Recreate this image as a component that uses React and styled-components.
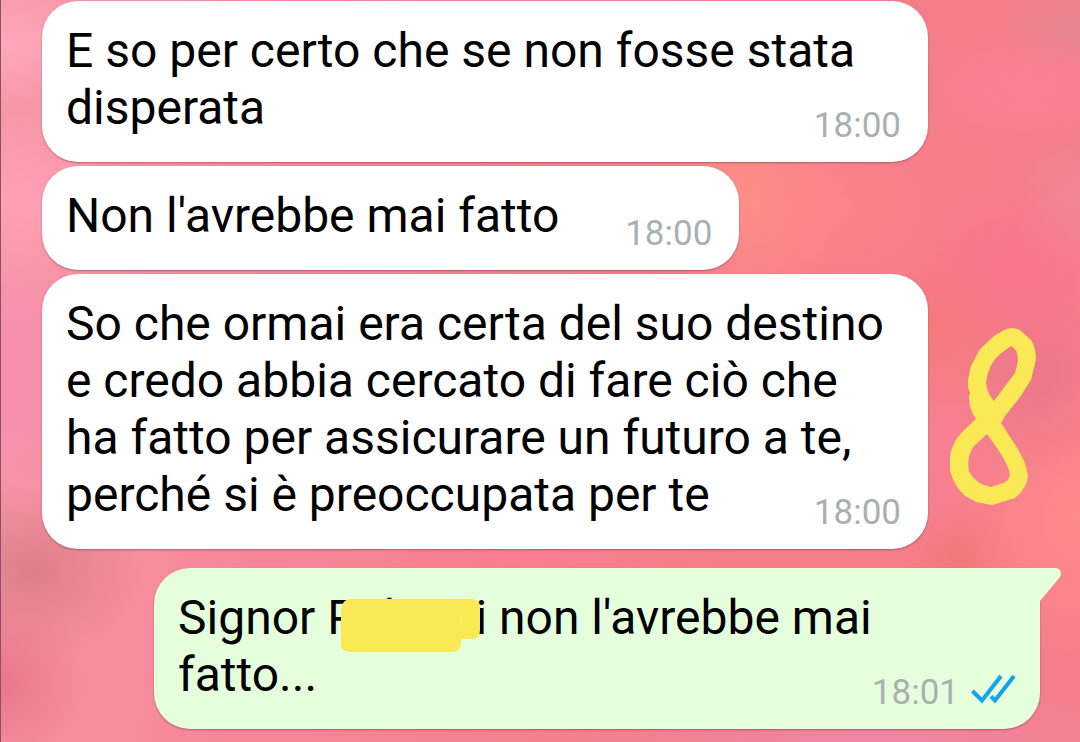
import { Fragment } from "react";
import styled, { createGlobalStyle } from "styled-components";

const GlobalStyle = createGlobalStyle`
  * {
    box-sizing: border-box;
  }

  body {
    margin: 0;
    font-family: Roboto, "Liberation Sans", sans-serif;
  }
`;

const Chat = styled.main`
  position: relative;
  display: flex;
  flex-direction: column;
  align-items: flex-start;
  gap: 4px;
  min-height: 100vh;
  padding: 1px 40px 13px 41px;
  overflow: hidden;
  border-left: 1px solid #8f4f62;
  background:
    radial-gradient(ellipse 130px 60px at 0% 6%, #ffa8bb, transparent),
    radial-gradient(ellipse 120px 90px at 1% 27%, #ffa0b5, transparent),
    radial-gradient(ellipse 110px 150px at 0% 50%, #f78fb0, transparent),
    radial-gradient(ellipse 110px 90px at 3% 77%, #de7d8a, transparent),
    radial-gradient(ellipse 90px 90px at 0% 92%, #ea758b, transparent),
    radial-gradient(ellipse 110px 120px at 69% 27%, #fe8e87, transparent),
    radial-gradient(ellipse 120px 90px at 78% 28%, #fb828a, transparent),
    radial-gradient(ellipse 80px 40px at 100% 4%, #e58790, transparent),
    radial-gradient(ellipse 120px 60px at 95% 12%, #fc8094, transparent),
    radial-gradient(ellipse 70px 70px at 100% 27%, #f38594, transparent),
    radial-gradient(ellipse 110px 90px at 94% 36%, #f9748b, transparent),
    radial-gradient(ellipse 70px 90px at 87% 44%, #f57a7c, transparent),
    radial-gradient(ellipse 60px 90px at 87% 61%, #f98094, transparent),
    radial-gradient(ellipse 80px 110px at 96% 50%, #ec7789, transparent),
    radial-gradient(ellipse 120px 140px at 100% 70%, #fe8b8b, transparent),
    radial-gradient(ellipse 60px 50px at 89% 75%, #ee7a7a, transparent),
    radial-gradient(ellipse 150px 60px at 48% 75%, #fb7d92, transparent),
    radial-gradient(ellipse 300px 60px at 80% 100%, #ee86a4, transparent),
    linear-gradient(100deg, #f59aa8 0%, #f68698 30%, #f37e89 65%, #f57f8c 100%);
`;

const Bubble = styled.article`
  position: relative;
  display: grid;
  align-items: end;
  width: ${({ $wide }) => ($wide ? "calc(100% - 112px)" : "auto")};
  padding: 21px 27px 26px 24px;
  border-radius: 36px;
  background: ${({ $sent }) => ($sent ? "#e5ffdc" : "#ffffff")};
  box-shadow: 0 1px 2px rgba(90, 30, 40, 0.4);
  ${({ $sent }) =>
    $sent &&
    `
    align-self: flex-end;
    margin-top: 15px;
    border-top-right-radius: 0;
  `}
`;

const Message = styled.p`
  grid-area: 1 / 1;
  margin: 0;
  font-size: 48px;
  line-height: 57px;
  color: #000000;
`;

/* keeps the last line clear of the time */
const TimeSpace = styled.span`
  display: inline-block;
  width: 153px;
`;

const Meta = styled.footer`
  grid-area: 1 / 1;
  justify-self: end;
  display: flex;
  align-items: baseline;
  gap: 11px;
  margin-right: ${({ $ticks }) => ($ticks ? "-3px" : "0")};
  margin-bottom: -11px;
  font-size: 35px;
  line-height: 42px;
  color: #a9b0b2;
`;

const Ticks = styled.svg`
  width: 46px;
  height: 30px;
`;

const Tail = styled.svg`
  position: absolute;
  top: 0;
  left: 100%;
  width: 21px;
  height: 34px;
`;

const Name = styled.span`
  position: relative;
`;

const HiddenPart = styled.span`
  display: inline-block;
  width: 118px;
  padding-left: 26px;
`;

const Marker = styled.svg`
  position: absolute;
  top: 10px;
  left: 14px;
  width: 139px;
  height: 53px;
`;

const Doodle = styled.svg`
  position: absolute;
  top: 327px;
  right: 43px;
  width: 88px;
  height: 178px;
`;

const messages = [
  {
    lines: ["E so per certo che se non fosse stata", "disperata"],
    time: "18:00",
    wide: true,
  },
  { lines: ["Non l'avrebbe mai fatto"], time: "18:00" },
  {
    lines: [
      "So che ormai era certa del suo destino",
      "e credo abbia cercato di fare ciò che",
      "ha fatto per assicurare un futuro a te,",
      "perché si è preoccupata per te",
    ],
    time: "18:00",
    wide: true,
  },
];

const CoveredName = () => (
  <Name>
    P<HiddenPart>l</HiddenPart>i
    <Marker viewBox="0 0 139 53" aria-hidden="true">
      <path
        d="M10 0H130Q139 0 139 9V31Q139 40 130 40H120V44Q120 53 111 53H9Q0 53 0 44V14Q0 0 10 0Z"
        fill="#f9ea55"
      />
      <path d="M120.500 18V22" stroke="#fdf7c0" />
    </Marker>
  </Name>
);

export default function App() {
  return (
    <>
      <GlobalStyle />
      <Chat>
        {messages.map(({ lines, time, wide }) => (
          <Bubble key={lines[0]} $wide={wide}>
            <Message>
              {lines.map((line, i) => (
                <Fragment key={line}>
                  {i > 0 && <br />}
                  <span>{line}</span>
                </Fragment>
              ))}
              <TimeSpace />
            </Message>
            <Meta>
              <time>{time}</time>
            </Meta>
          </Bubble>
        ))}
        <Bubble $wide $sent>
          <Tail viewBox="0 0 21 34" aria-hidden="true">
            <path d="M0 0H16Q23 2 20 9L0 33Z" fill="#e5ffdc" />
          </Tail>
          <Message>
            Signor <CoveredName /> <span>non l'avrebbe mai</span>
            <br />
            <span>fatto...</span>
          </Message>
          <Meta $ticks>
            <time>18:01</time>
            <Ticks viewBox="0 0 46 30" role="img" aria-label="Letto">
              <path
                d="M2.500 17L12 26.500L31 2M21 22.500L25 26.500L44 2"
                fill="none"
                stroke="#12a5e8"
                strokeWidth="4"
              />
            </Ticks>
          </Meta>
        </Bubble>
        <Doodle viewBox="0 0 88 178" aria-hidden="true">
          <path
            d="M19 53L22 39L31 22L45 9L57 2Q64 0 71 3L82 13Q87 21 87 32L82 53L71 70L56 89L52 96L65 116Q77 134 79 149Q78 161 66 171L43 178L27 175L15 168Q5 158 1 144V129Q3 116 13 105L27 92Q20 83 20 70L21 66L19 60ZM37 56Q38 66 45 74L66 46L69 34Q69 22 62 19L51 27Q39 37 37 56ZM38 107L25 119Q17 130 20 144Q26 157 42 160L51 157Q59 156 61 148L60 143Q56 131 38 107Z"
            fill="#f9ea55"
            fillRule="evenodd"
          />
        </Doodle>
      </Chat>
    </>
  );
}
